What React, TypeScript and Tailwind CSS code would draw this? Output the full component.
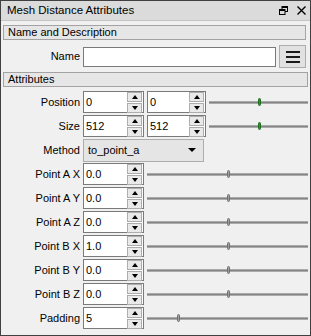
import React from "react";

function UpArrow() {
  return <div className="w-0 h-0 border-x-[3px] border-x-transparent border-b-[4px] border-b-black" />;
}
function DownArrow() {
  return <div className="w-0 h-0 border-x-[3px] border-x-transparent border-t-[4px] border-t-black" />;
}

function SpinButtons() {
  return (
    <div className="flex flex-col justify-center gap-[1px] pr-[1px]">
      <div className="w-[15px] h-[10px] bg-[#e9e9e9] border border-[#adadad] flex items-center justify-center">
        <UpArrow />
      </div>
      <div className="w-[15px] h-[10px] bg-[#e9e9e9] border border-[#adadad] flex items-center justify-center">
        <DownArrow />
      </div>
    </div>
  );
}

function Spin({ value, wide }: { value: string; wide?: boolean }) {
  return (
    <div
      className={
        wide
          ? "w-[61px] h-[22px] bg-white border border-[#7a7a7a] flex items-center justify-between shrink-0"
          : "w-[59px] h-[22px] bg-white border border-[#7a7a7a] flex items-center justify-between shrink-0"
      }
    >
      <span className="pl-[2px] text-black">{value}</span>
      <SpinButtons />
    </div>
  );
}

function Slider({ pos, green }: { pos: number; green?: boolean }) {
  return (
    <div className="relative flex-1 h-[22px] flex items-center">
      <div className="w-full h-[3px] bg-[#858585] border-y border-[#aaaaaa]" />
      <div
        className={
          green
            ? "absolute top-1/2 -translate-y-1/2 w-[3px] h-[8px] rounded-full border bg-[#2a9a2a] border-[#1c6d1c]"
            : "absolute top-1/2 -translate-y-1/2 w-[3px] h-[8px] rounded-full border bg-[#a0a0a0] border-[#6e6e6e]"
        }
        style={{ left: `calc(${pos * 100}% - 1px)` }}
      />
    </div>
  );
}

export default function App() {
  const singles: [string, string, number][] = [
    ["Point A X", "0.0", 0.5],
    ["Point A Y", "0.0", 0.5],
    ["Point A Z", "0.0", 0.5],
    ["Point B X", "1.0", 0.5],
    ["Point B Y", "0.0", 0.5],
    ["Point B Z", "0.0", 0.5],
    ["Padding", "5", 0.19],
  ];
  return (
    <div className="w-[311px] h-[336px] border border-[#404040] bg-[#f0f0f0] font-['Liberation_Sans',Arial,sans-serif] text-[11px] text-black leading-none">
      <div className="h-[20px] bg-[#dbdbdb] border-b border-[#c4c4c4] flex items-center justify-between pl-[6px] pr-[4px]">
        <span className="text-[11.5px]">Mesh Distance Attributes</span>
        <div className="flex items-center gap-[9px]">
          <svg width="9" height="9" viewBox="0 0 9 9">
            <rect x="3" y="0.5" width="5.5" height="5" fill="none" stroke="#000" />
            <rect x="3" y="0" width="6" height="2" fill="#000" />
            <rect x="0.5" y="3.5" width="5.5" height="5" fill="#dbdbdb" stroke="#000" />
            <rect x="0" y="3" width="6" height="2" fill="#000" />
          </svg>
          <svg width="9" height="9" viewBox="0 0 9 9">
            <path d="M0.5 0.5 L8.5 8.5 M8.5 0.5 L0.5 8.5" stroke="#000" strokeWidth="1.4" />
          </svg>
        </div>
      </div>
      <div className="mt-[4px] ml-[2px] mr-[4px] h-[15px] bg-[#e6e6e6] border border-[#a3a3a3] flex items-center pl-[4px]">
        Name and Description
      </div>
      <div className="mt-[5px] ml-[2px] flex items-center h-[23px] mr-[4px]">
        <div className="w-[77px] shrink-0 text-right">Name</div>
        <div className="ml-[3px] flex-1 h-[20px] bg-white border border-[#7a7a7a]" />
        <div className="ml-[3px] w-[27px] h-[23px] bg-[#e1e1e1] border border-[#adadad] flex flex-col items-center justify-center gap-[3px]">
          <div className="w-[14px] h-[2px] bg-[#1a1a1a]" />
          <div className="w-[14px] h-[2px] bg-[#1a1a1a]" />
          <div className="w-[14px] h-[2px] bg-[#1a1a1a]" />
        </div>
      </div>
      <div className="mt-[4px] ml-[2px] mr-[2px] h-[15px] bg-[#e6e6e6] border border-[#a3a3a3] flex items-center pl-[4px]">
        Attributes
      </div>
      <div className="mt-[4px] grid grid-cols-[79px_1fr] gap-x-[3px] gap-y-[2px] items-center mr-[2px]">
        <div className="text-right">Position</div>
        <div className="h-[22px] flex items-center gap-[3px]">
          <Spin value="0" wide />
          <Spin value="0" />
          <Slider pos={0.5} green />
        </div>
        <div className="text-right">Size</div>
        <div className="h-[22px] flex items-center gap-[3px]">
          <Spin value="512" wide />
          <Spin value="512" />
          <Slider pos={0.5} green />
        </div>
        <div className="text-right">Method</div>
        <div className="h-[22px] flex items-center">
          <div className="w-[121px] h-[23px] bg-[#e5e5e5] border border-[#adadad] flex items-center justify-between pl-[4px] pr-[7px]">
            <span>to_point_a</span>
            <span className="w-0 h-0 border-x-[4px] border-x-transparent border-t-[4px] border-t-black" />
          </div>
        </div>
        {singles.map(([l, v, p]) => (
          <React.Fragment key={l}>
            <div className="text-right">{l}</div>
            <div className="h-[22px] flex items-center gap-[3px]">
              <Spin value={v} wide />
              <Slider pos={p} />
            </div>
          </React.Fragment>
        ))}
      </div>
    </div>
  );
}
